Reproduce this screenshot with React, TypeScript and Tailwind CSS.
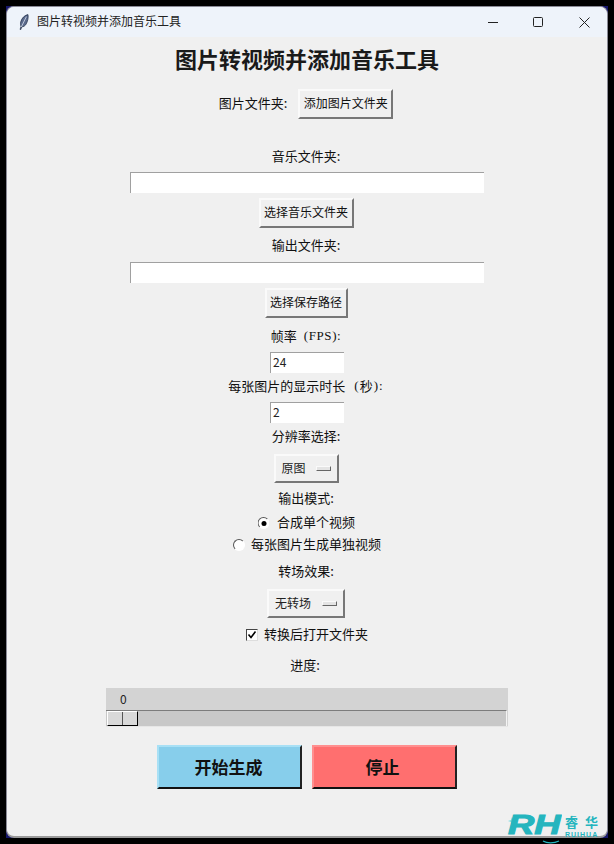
import React from "react";

const cjk = { fontFamily: '"Noto Sans CJK SC", sans-serif' };
const serif = { fontFamily: '"Liberation Serif", serif' };

function Label({ children, className = "" }: { children: React.ReactNode; className?: string }) {
  return (
    <div className={`h-4 flex items-center justify-center whitespace-nowrap text-[13px] leading-4 text-[#111] -translate-y-[1px] ${className}`}>
      {children}
    </div>
  );
}

function TkButton({ children, className = "" }: { children: React.ReactNode; className?: string }) {
  return (
    <div className={`h-[30px] flex items-center justify-center pb-[2px] whitespace-nowrap border-2 border-t-[#fafafa] border-l-[#fafafa] border-r-[#777] border-b-[#777] bg-[#f0f0f0] text-[12px] text-[#111] ${className}`}>
      {children}
    </div>
  );
}

function Entry({ value = "", className = "" }: { value?: string; className?: string }) {
  return (
    <div className={`h-[21px] flex items-center pl-[2px] pb-[2px] bg-white border-t border-l border-t-[#a0a0a0] border-l-[#a0a0a0] text-[12px] text-[#222] ${className}`}>
      {value}
    </div>
  );
}

function Menu({ children, className = "" }: { children: React.ReactNode; className?: string }) {
  return (
    <div className={`h-[29px] flex items-center justify-between pl-[6px] pr-[6px] border-2 border-t-[#fafafa] border-l-[#fafafa] border-r-[#777] border-b-[#777] bg-[#f0f0f0] text-[12px] text-[#222] ${className}`}>
      <span className="-translate-y-[1px]">{children}</span>
      <span className="block w-[15px] h-[5px] border border-t-[#fafafa] border-l-[#fafafa] border-r-[#666] border-b-[#666] bg-[#e4e4e4]" />
    </div>
  );
}

function Feather() {
  return (
    <svg width="10" height="16" viewBox="0 0 10 16" fill="none">
      <path d="M9 .6C5.8 1.2 2.6 4 1.700 8c-.4 1.800-.2 3.400.3 4.400l-.9 3 .7.2.9-2.800c1.600.2 3.400-.8 4.600-3C8.600 7.400 9.600 3.600 9 .6Z" fill="#5a6a8c" stroke="#1d2a44" strokeWidth=".7" />
      <path d="M7.400 2.600 2.300 13" stroke="#e8eefa" strokeWidth=".7" />
    </svg>
  );
}

export default function App() {
  return (
    <div className="relative w-[614px] h-[844px] bg-black pt-[6px] px-[6px] overflow-hidden" style={cjk}>
      <div className="w-[602px] h-[832px] bg-[#17176b]">
        <div className="w-full h-full rounded-[8px] overflow-hidden border border-[#8a8a96] border-b-2 border-b-[#9a9a9a] bg-[#f0f0f0] flex flex-col items-center">
          {/* title bar */}
          <div className="w-full h-[30px] shrink-0 flex items-center bg-[#eef3fa]">
            <div className="ml-[12px] w-[10px] h-4 flex items-center"><Feather /></div>
            <span className="ml-[8px] text-[12px] text-[#222] whitespace-nowrap -translate-y-[1px]">图片转视频并添加音乐工具</span>
            <div className="ml-auto flex items-center text-[#222]">
              <svg width="10" height="10" viewBox="0 0 10 10" className="mr-[35px]"><path d="M0 5.500H10" stroke="#222" strokeWidth="1" /></svg>
              <svg width="10" height="10" viewBox="0 0 10 10" className="mr-[36px]"><rect x=".5" y=".5" width="9" height="9" rx="1" fill="none" stroke="#222" strokeWidth="1" /></svg>
              <svg width="11" height="11" viewBox="0 0 11 11" className="mr-[17px]"><path d="M.5.5l10 10M10.500.5l-10 10" stroke="#222" strokeWidth="1" /></svg>
            </div>
          </div>

          <div className="mt-[9px] h-7 flex items-center whitespace-nowrap text-[22px] font-bold text-[#1a1a1a] -translate-y-[2px]">图片转视频并添加音乐工具</div>

          <div className="mt-[15px] flex items-center -translate-x-[1px]">
            <Label>图片文件夹:</Label>
            <TkButton className="ml-[11px] w-[95px]">添加图片文件夹</TkButton>
          </div>

          <Label className="mt-[30px] -translate-x-[1px]">音乐文件夹:</Label>
          <Entry className="mt-[7px] w-[354px]" />
          <TkButton className="mt-[5px] w-[95px] -translate-x-[1px]">选择音乐文件夹</TkButton>

          <Label className="mt-[10px] -translate-x-[1px]">输出文件夹:</Label>
          <Entry className="mt-[8px] w-[354px]" />
          <TkButton className="mt-[5px] w-[83px] -translate-x-[1px]">选择保存路径</TkButton>

          <Label className="mt-[11px] -translate-x-[1px]">
            帧率<span className="ml-[7px] tracking-[.6px]" style={serif}>(FPS):</span>
          </Label>
          <Entry value="24" className="mt-[7px] w-[74px]" />
          <Label className="mt-[6px] -translate-x-[1px]">
            每张图片的显示时长<span className="ml-[9px] mr-[1px]" style={serif}>(</span>秒<span className="ml-[1px] tracking-[1px]" style={serif}>):</span>
          </Label>
          <Entry value="2" className="mt-[7px] w-[74px]" />
          <Label className="mt-[6px] -translate-x-[1px]">分辨率选择:</Label>
          <Menu className="mt-[9px] w-[65px] -translate-x-[1px]">原图</Menu>

          <Label className="mt-[8px] -translate-x-[1px]">输出模式:</Label>
          <div className="mt-[8px] h-4 flex items-center -translate-x-[.5px]">
            <span className="relative w-3 h-3 rounded-full bg-white border border-t-[#555] border-l-[#555] border-r-white border-b-white flex items-center justify-center">
              <span className="w-[5px] h-[5px] rounded-full bg-black" />
            </span>
            <span className="ml-[7px] text-[13px] text-[#111] -translate-y-[1px]">合成单个视频</span>
          </div>
          <div className="mt-[6px] h-4 flex items-center">
            <span className="w-3 h-3 rounded-full bg-white border border-t-[#555] border-l-[#555] border-r-white border-b-white" />
            <span className="ml-[6px] text-[13px] text-[#111] -translate-y-[1px]">每张图片生成单独视频</span>
          </div>
          <Label className="mt-[11px] -translate-x-[1px]">转场效果:</Label>
          <Menu className="mt-[9px] w-[78px] -translate-x-[1px]">无转场</Menu>

          <div className="mt-[9px] h-4 flex items-center">
            <span className="w-3 h-3 bg-white border border-t-[#444] border-l-[#444] border-r-[#ddd] border-b-[#ddd] flex items-center justify-center">
              <svg width="10" height="10" viewBox="0 0 10 10"><path d="M1.500 4.500 4 7.500 8.500 1.500" fill="none" stroke="#000" strokeWidth="1.600" /></svg>
            </span>
            <span className="ml-[6px] text-[13px] text-[#111] -translate-y-[1px]">转换后打开文件夹</span>
          </div>

          <Label className="mt-[15px] -translate-x-[2px]">进度:</Label>

          {/* scale */}
          <div className="mt-[14px] w-[402px] h-[39px] bg-[#d3d3d3] flex flex-col">
            <div className="h-[22px] pl-[14px] flex items-center text-[12px] text-[#222] shrink-0">0</div>
            <div className="w-[401px] h-[16px] bg-[#c8c8c8] border-t border-t-[#7c7c7c] border-r border-r-[#f4f4f4] flex">
              <div className="ml-[1px] w-[31px] h-[15px] flex bg-[#d9d9d9] border border-t-white border-l-white border-r-black border-b-black">
                <div className="w-[15px] h-full border-r border-r-[#555]" />
              </div>
            </div>
            <div className="h-[1px] bg-[#e6e6e6]" />
          </div>

          {/* action buttons */}
          <div className="mt-[18px] flex gap-[10px]">
            <div className="w-[145px] h-[44px] flex items-center justify-center pr-[2px] bg-[#87ceeb] border-2 border-t-[#a8e0f5] border-l-[#a8e0f5] border-r-[#222] border-b-[#111] text-[17px] font-bold text-[#111]">开始生成</div>
            <div className="w-[145px] h-[44px] flex items-center justify-center pr-[4px] bg-[#ff6f6f] border-2 border-t-[#ff8f8f] border-l-[#ff8f8f] border-r-[#222] border-b-[#111] text-[17px] font-bold text-[#111]">停止</div>
          </div>
        </div>
      </div>

      {/* watermark */}
      <div className="absolute left-[506px] top-[813px] w-[100px] h-[31px]">
        <svg width="8" height="8" viewBox="0 0 8 8" className="absolute left-[2px] top-[4px]"><path d="M4 0 5 3 8 4 5 5 4 8 3 5 0 4 3 3Z" fill="#7fdde2" /></svg>
        <svg width="18" height="4" viewBox="0 0 18 4" className="absolute left-[36px] top-[27px]"><path d="M1 1C5 3.500 12 3.500 17 1" fill="none" stroke="#25b5be" strokeWidth="1.200" /></svg>
        <span className="absolute left-[2px] top-[-5px] origin-left scale-x-[1.35] text-[27px] leading-[34px] font-black italic text-[#25b5be] [-webkit-text-stroke:1px_#25b5be]" style={{ fontFamily: '"Liberation Sans", sans-serif' }}>RH</span>
        <span className="absolute left-[59px] top-[2px] text-[13px] leading-[14px] font-bold text-[#25b5be] tracking-[7px] whitespace-nowrap">睿华</span>
        <span className="absolute left-[59px] top-[19px] text-[7px] leading-[5px] h-[5px] font-bold text-[#25b5be] tracking-[1px]" style={{ fontFamily: '"Liberation Sans", sans-serif' }}>RUIHUA</span>
      </div>
    </div>
  );
}
